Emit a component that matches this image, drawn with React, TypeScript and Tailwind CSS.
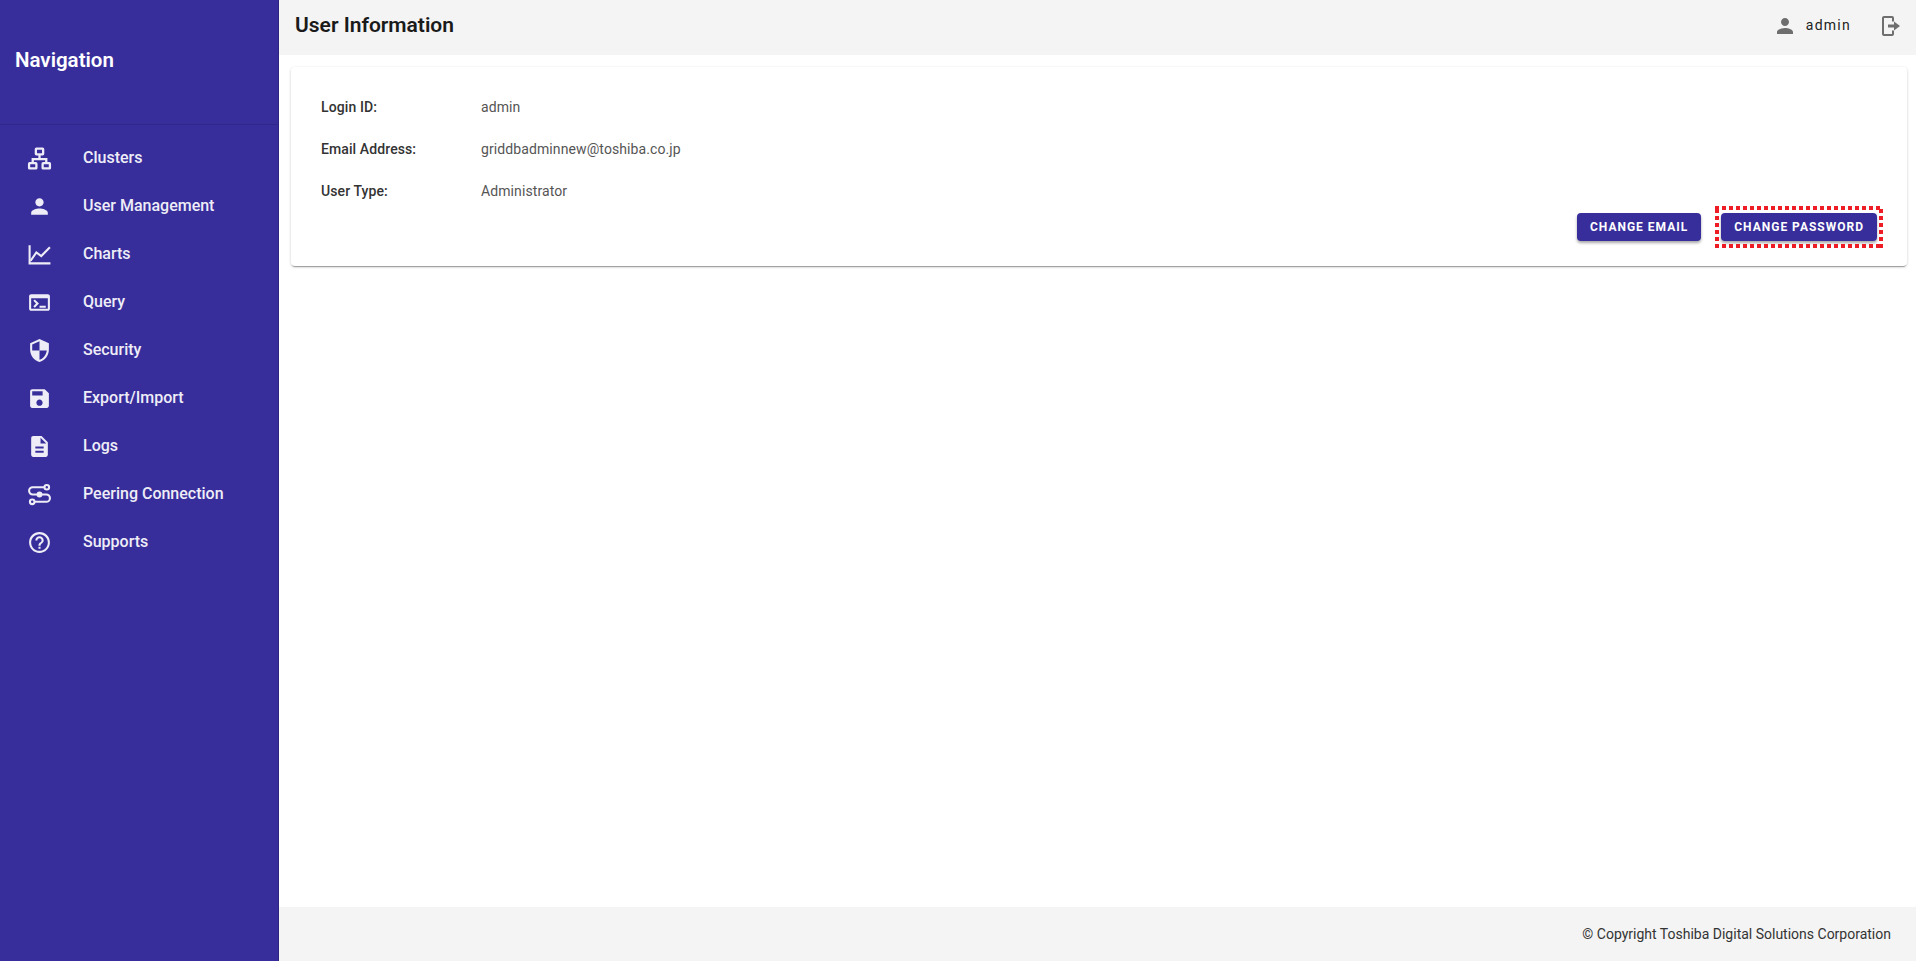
import React from "react";

const P = ({ d, c = "w-[25px] h-[25px]" }: { d: string; c?: string }) => (
  <svg viewBox="0 0 24 24" className={c} fill="currentColor"><path d={d} /></svg>
);

const person = "M12 12c2.21 0 4-1.79 4-4s-1.79-4-4-4-4 1.79-4 4 1.79 4 4 4zm0 2c-2.67 0-8 1.34-8 4v2h16v-2c0-2.66-5.33-4-8-4z";

const Clusters = () => (
  <svg viewBox="0 0 24 24" className="w-[25px] h-[25px]" fill="none" stroke="currentColor" strokeWidth="2.2">
    <rect x="8.5" y="2.5" width="7" height="5.5" rx="0.5" />
    <rect x="2" y="16.5" width="7" height="5" rx="0.5" />
    <rect x="15" y="16.5" width="7" height="5" rx="0.5" />
    <path d="M12 8v4.5M5.5 16.5v-4h13v4" />
  </svg>
);

const Charts = () => (
  <svg viewBox="0 0 24 24" className="w-[25px] h-[25px]" fill="none" stroke="currentColor" strokeWidth="2">
    <path d="M2.5 3v17.5h20" />
    <path d="M3.5 18L9 10l4.7 3.5L22 5" />
  </svg>
);

const Peering = () => (
  <svg viewBox="0 0 24 24" className="w-[25px] h-[25px]" fill="none" stroke="currentColor" strokeWidth="2">
    <path d="M16.5 5H5.5a3.5 3.5 0 0 0 0 7h13a3.5 3.5 0 0 1 0 7H7.5" />
    <circle cx="19" cy="5" r="2.2" />
    <circle cx="5" cy="19" r="2.2" />
    <circle cx="12" cy="12" r="2.8" fill="currentColor" stroke="none" />
  </svg>
);

const nav: { label: string; icon: React.ReactNode }[] = [
  { label: "Clusters", icon: <Clusters /> },
  { label: "User Management", icon: <P d={person} /> },
  { label: "Charts", icon: <Charts /> },
  { label: "Query", icon: <P d="M20 4H4c-1.11 0-2 .9-2 2v12c0 1.1.89 2 2 2h16c1.1 0 2-.9 2-2V6c0-1.1-.89-2-2-2zm0 14H4V8h16v10zm-2-1h-6v-2h6v2zM7.5 17l-1.41-1.41L8.67 13l-2.59-2.59L7.5 9l4 4-4 4z" /> },
  { label: "Security", icon: <P d="M12 1L3 5v6c0 5.55 3.84 10.74 9 12 5.16-1.26 9-6.45 9-12V5l-9-4zm0 10.99h7c-.53 4.12-3.28 7.79-7 8.94V12H5V6.3l7-3.11v8.8z" /> },
  { label: "Export/Import", icon: <P d="M17 3H5c-1.11 0-2 .9-2 2v14c0 1.1.89 2 2 2h14c1.1 0 2-.9 2-2V7l-4-4zm-5 16c-1.66 0-3-1.34-3-3s1.34-3 3-3 3 1.34 3 3-1.34 3-3 3zm3-10H5V5h10v4z" /> },
  { label: "Logs", icon: <P d="M14 2H6c-1.1 0-1.99.9-1.99 2L4 20c0 1.1.89 2 1.99 2H18c1.1 0 2-.9 2-2V8l-6-6zm2 16H8v-2h8v2zm0-4H8v-2h8v2zm-3-5V3.5L18.5 9H13z" /> },
  { label: "Peering Connection", icon: <Peering /> },
  { label: "Supports", icon: <P d="M11 18h2v-2h-2v2zm1-16C6.48 2 2 6.48 2 12s4.48 10 10 10 10-4.48 10-10S17.52 2 12 2zm0 18c-4.41 0-8-3.59-8-8s3.59-8 8-8 8 3.59 8 8-3.59 8-8 8zm0-14c-2.21 0-4 1.79-4 4h2c0-1.1.9-2 2-2s2 .9 2 2c0 2-3 1.75-3 5h2c0-2.25 3-2.5 3-5 0-2.21-1.79-4-4-4z" /> },
];

const info = [
  ["Login ID:", "admin"],
  ["Email Address:", "griddbadminnew@toshiba.co.jp"],
  ["User Type:", "Administrator"],
];

const Btn = ({ children }: { children: React.ReactNode }) => (
  <button className="h-7 px-[13px] rounded bg-[#382e9b] text-white text-[12px] font-bold tracking-[1px] shadow-[0_2px_3px_rgba(0,0,0,0.35)]">
    {children}
  </button>
);

export default function App() {
  return (
    <div className="flex h-[961px] w-[1916px] overflow-hidden bg-white font-['Roboto',sans-serif]">
      <aside className="w-[279px] shrink-0 bg-[#382e9b] border-r border-[#2d2580] text-[#eeedf7]">
        <div className="h-[125px] border-b border-[#30278a] pl-[15px] pt-[47px] text-[20.5px] leading-[26px] font-semibold text-white">Navigation</div>
        <nav className="pt-[9px]">
          {nav.map((n) => (
            <div key={n.label} className="h-12 flex items-center pl-[27px]">
              <span className="w-[56px] shrink-0">{n.icon}</span>
              <span className="text-[16px] font-medium">{n.label}</span>
            </div>
          ))}
        </nav>
      </aside>
      <div className="flex-1 min-w-0 flex flex-col">
        <header className="h-[55px] shrink-0 bg-[#f4f4f4] flex items-center pl-[16px] pr-[15px] pb-1">
          <h1 className="text-[21px] font-semibold text-[#1a1a1a]">User Information</h1>
          <div className="ml-auto flex items-center text-[#6e6e6e]">
            <P d={person} c="w-6 h-6" />
            <span className="ml-[9px] text-[14px] tracking-[1.25px] text-[#222]">admin</span>
            <svg viewBox="0 0 24 24" className="w-6 h-6 ml-[26px]" fill="none" stroke="currentColor" strokeWidth="2">
              <path d="M16 7.5V4a1 1 0 0 0-1-1H7a1 1 0 0 0-1 1v16a1 1 0 0 0 1 1h8a1 1 0 0 0 1-1v-3.5" />
              <path d="M11 12h6" strokeWidth="3" />
              <path d="M17 7.5l6 4.5-6 4.5z" fill="currentColor" stroke="none" />
            </svg>
          </div>
        </header>
        <main className="flex-1 pl-3 pr-[9px] pt-3">
          <section className="relative h-[199px] rounded bg-white shadow-[0_2px_1px_-1px_rgba(0,0,0,0.3),0_1px_3px_0_rgba(0,0,0,0.2)] pl-[30px] pt-[28px] text-[14px] tracking-[0.1px]">
            {info.map(([k, v]) => (
              <div key={k} className="flex h-[42px] items-start leading-[24px]">
                <span className="w-[160px] font-medium text-[#333]">{k}</span>
                <span className="text-[#555]">{v}</span>
              </div>
            ))}
            <div className="absolute right-[30px] bottom-[25px] flex items-center gap-5">
              <Btn>CHANGE EMAIL</Btn>
              <div className="relative flex">
                <Btn>CHANGE PASSWORD</Btn>
                <div className="absolute -inset-x-[6px] -inset-y-[7px] pointer-events-none">
                  <div className="absolute inset-x-0 top-0 h-1 bg-[repeating-linear-gradient(90deg,#ee1c25_0_4px,transparent_4px_7px)]" />
                  <div className="absolute inset-x-0 bottom-0 h-1 bg-[repeating-linear-gradient(90deg,#ee1c25_0_4px,transparent_4px_7px)]" />
                  <div className="absolute inset-y-0 left-0 w-1 bg-[repeating-linear-gradient(0deg,#ee1c25_0_4px,transparent_4px_7px)]" />
                  <div className="absolute inset-y-0 right-0 w-1 bg-[repeating-linear-gradient(0deg,#ee1c25_0_4px,transparent_4px_7px)]" />
                </div>
              </div>
            </div>
          </section>
        </main>
        <footer className="h-[54px] shrink-0 bg-[#f4f4f4] flex items-center justify-end pr-[25px] text-[14px] text-[#333]">
          © Copyright Toshiba Digital Solutions Corporation
        </footer>
      </div>
    </div>
  );
}
